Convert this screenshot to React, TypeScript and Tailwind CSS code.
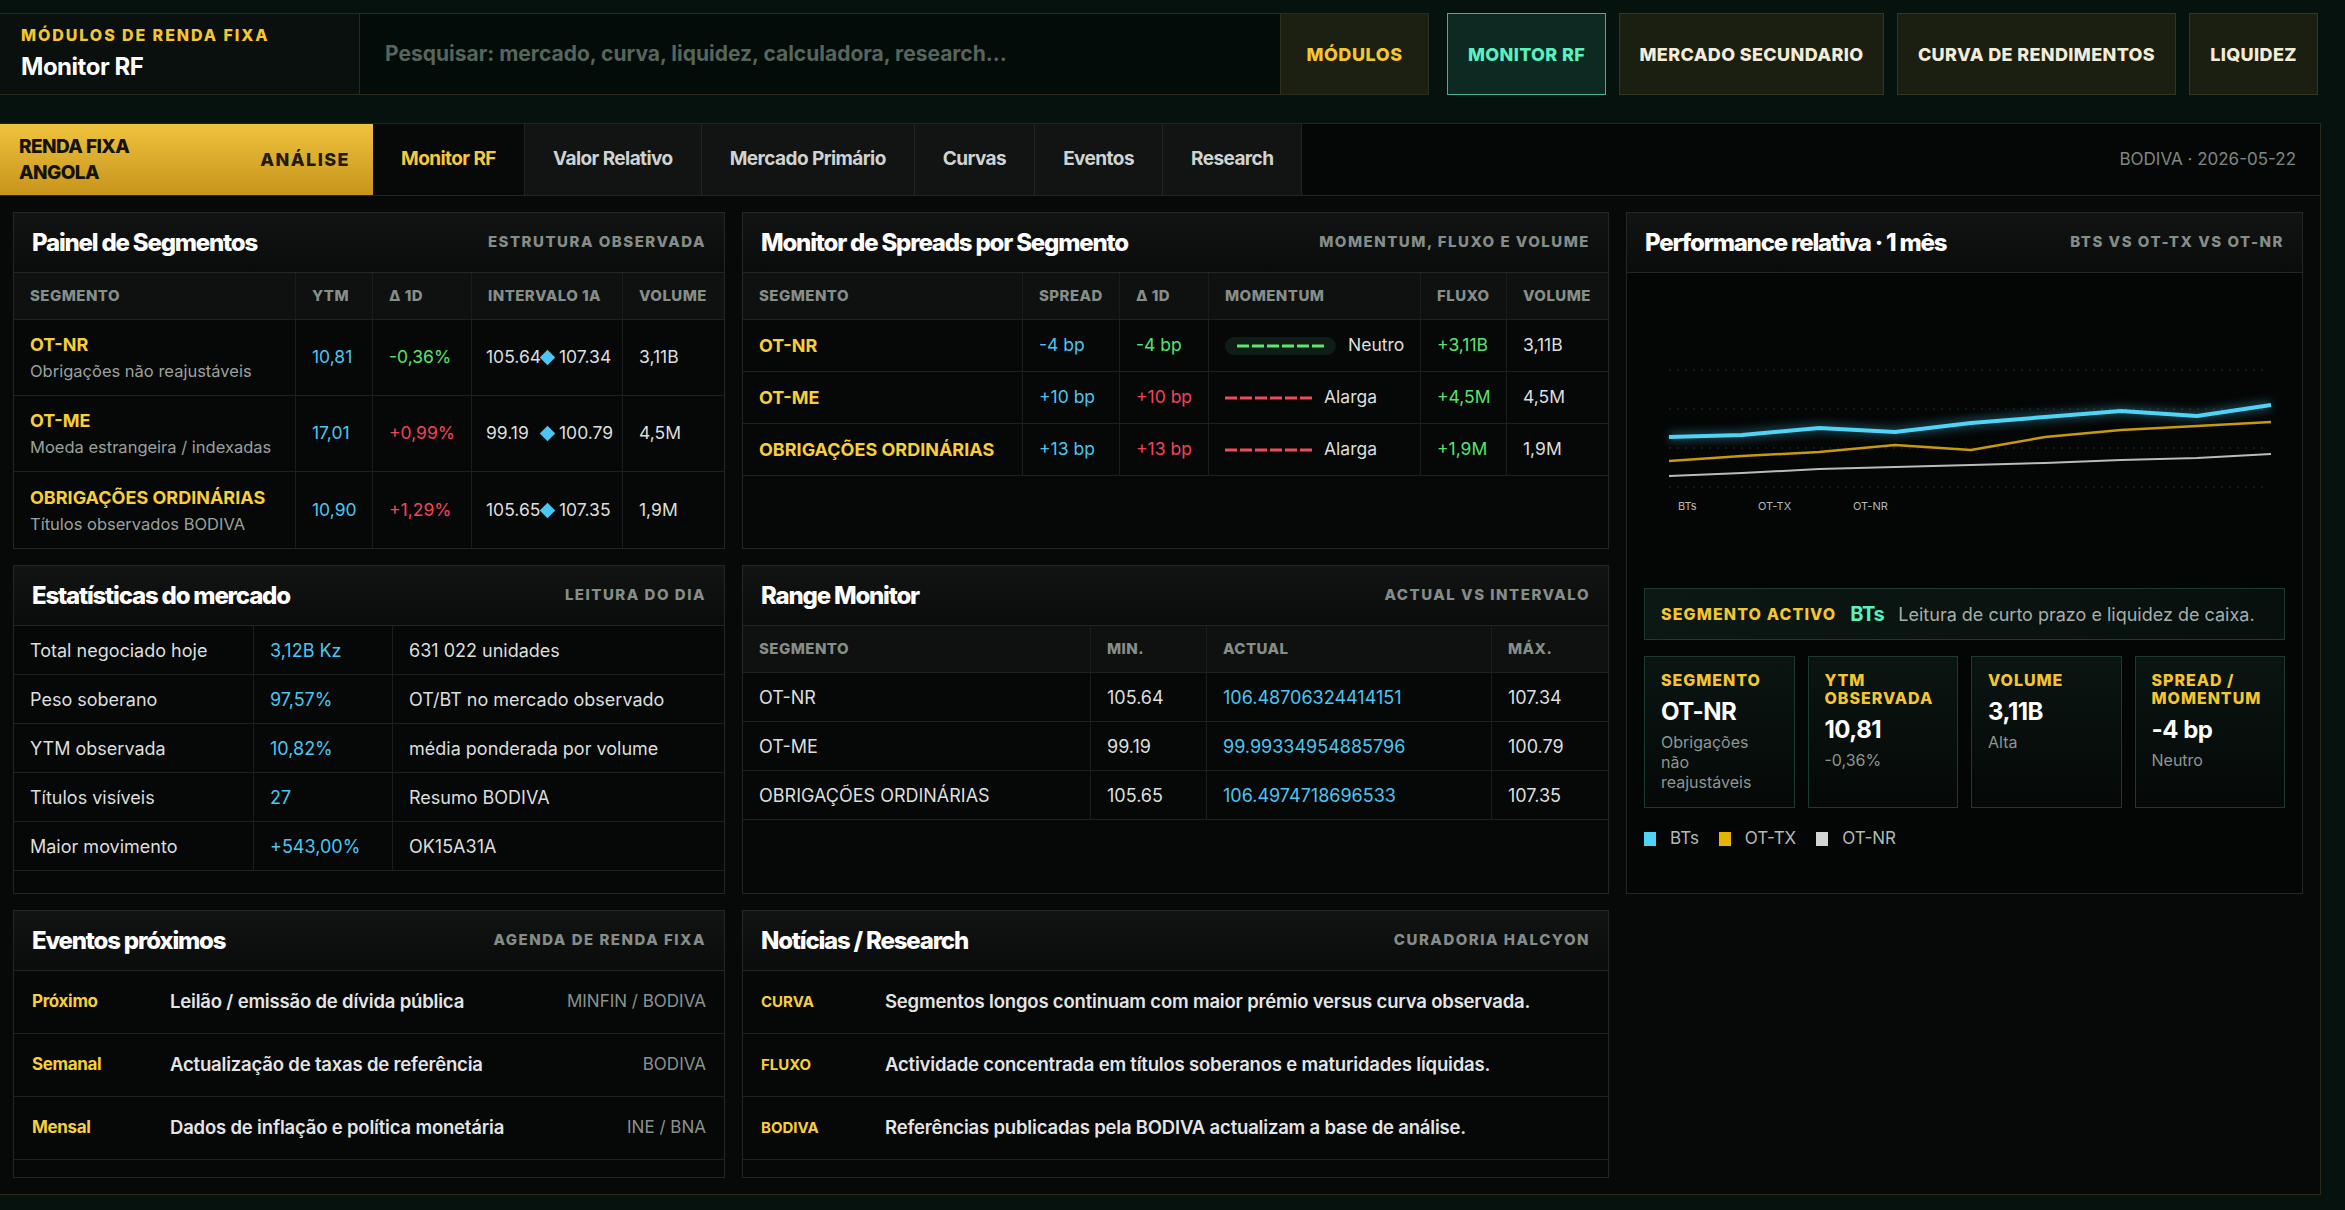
import React from "react";

const segs = [
  { name: "OT-NR", desc: "Obrigações não reajustáveis", ytm: "10,81", d: "-0,36%", good: true, min: "105.64", max: "107.34", vol: "3,11B" },
  { name: "OT-ME", desc: "Moeda estrangeira / indexadas", ytm: "17,01", d: "+0,99%", good: false, min: "99.19", max: "100.79", vol: "4,5M" },
  { name: "OBRIGAÇÕES ORDINÁRIAS", desc: "Títulos observados BODIVA", ytm: "10,90", d: "+1,29%", good: false, min: "105.65", max: "107.35", vol: "1,9M" },
];

const spreads = [
  { name: "OT-NR", spread: "-4 bp", d: "-4 bp", good: true, mom: "Neutro", flow: "+3,11B", vol: "3,11B" },
  { name: "OT-ME", spread: "+10 bp", d: "+10 bp", good: false, mom: "Alarga", flow: "+4,5M", vol: "4,5M" },
  { name: "OBRIGAÇÕES ORDINÁRIAS", spread: "+13 bp", d: "+13 bp", good: false, mom: "Alarga", flow: "+1,9M", vol: "1,9M" },
];

const stats = [
  ["Total negociado hoje", "3,12B Kz", "631 022 unidades"],
  ["Peso soberano", "97,57%", "OT/BT no mercado observado"],
  ["YTM observada", "10,82%", "média ponderada por volume"],
  ["Títulos visíveis", "27", "Resumo BODIVA"],
  ["Maior movimento", "+543,00%", "OK15A31A"],
];

const ranges = [
  ["OT-NR", "105.64", "106.48706324414151", "107.34"],
  ["OT-ME", "99.19", "99.99334954885796", "100.79"],
  ["OBRIGAÇÕES ORDINÁRIAS", "105.65", "106.4974718696533", "107.35"],
];

const events = [
  ["Próximo", "Leilão / emissão de dívida pública", "MINFIN / BODIVA"],
  ["Semanal", "Actualização de taxas de referência", "BODIVA"],
  ["Mensal", "Dados de inflação e política monetária", "INE / BNA"],
];

const news = [
  ["CURVA", "Segmentos longos continuam com maior prémio versus curva observada."],
  ["FLUXO", "Actividade concentrada em títulos soberanos e maturidades líquidas."],
  ["BODIVA", "Referências publicadas pela BODIVA actualizam a base de análise."],
];

const xs = [42, 115, 192, 268, 344, 418, 494, 570, 644];
const series = {
  bts: [164, 162, 155, 159, 150, 144, 138, 143, 132],
  ottx: [188, 183, 179, 172, 177, 164, 157, 153, 149],
  otnr: [203, 200, 196, 194, 192, 190, 187, 185, 181],
};
const pts = (ys: number[]) => ys.map((y, i) => `${xs[i]},${y}`).join(" ");

function Panel({ title, sub, children, className = "" }: { title: string; sub: string; children: React.ReactNode; className?: string }) {
  return (
    <section className={`flex flex-col border border-[#242625] bg-[#060707] ${className}`}>
      <div className="flex h-[60px] shrink-0 items-center justify-between border-b border-[#242625] bg-gradient-to-b from-[#121414] to-[#0a0b0b] px-[18px]">
        <h2 className="text-[24px] font-extrabold tracking-[-0.05em] text-white">{title}</h2>
        <span className="text-[15px] font-extrabold uppercase tracking-[0.1em] text-[#858d89]">{sub}</span>
      </div>
      {children}
    </section>
  );
}

function Dashes({ color }: { color: string }) {
  return (
    <svg width="87" height="4" className="block shrink-0">
      <line x1="0" y1="2" x2="87" y2="2" stroke={color} strokeWidth="3" strokeDasharray="12 3" />
    </svg>
  );
}

const th = "flex items-center whitespace-nowrap px-[16px] text-[15px] font-extrabold uppercase tracking-[0.03em] text-[#868e8a] border-r border-[#1b1d1c] last:border-r-0";
const td = "flex items-center whitespace-nowrap px-[16px] border-r border-[#1b1d1c] last:border-r-0";

export default function App() {
  return (
    <div className="min-h-screen w-[2345px] bg-[#06120e] pt-[13px] font-['Inter',sans-serif] text-[18px] text-[#dcdfdd]">
      {/* top bar */}
      <header className="flex h-[82px] w-[2318px] gap-[13px]">
        <div className="mr-[5px] flex flex-1 border-y border-[#2a2b1d] bg-[#040c09]">
          <div className="flex w-[360px] flex-col justify-center border-r border-[#2a2b1d] bg-[#09100d] pl-[21px]">
            <div className="text-[16px] font-extrabold tracking-[0.12em] text-[#f4c631]">MÓDULOS DE RENDA FIXA</div>
            <div className="mt-[2px] text-[24px] font-bold tracking-[-0.02em] text-white">Monitor RF</div>
          </div>
          <div className="flex flex-1 items-center pl-[25px] text-[21px] font-bold text-[#56655d]">
            Pesquisar: mercado, curva, liquidez, calculadora, research...
          </div>
          <div className="flex w-[149px] items-center justify-center border-x border-[#2f311e] bg-[#1b2013] text-[18px] font-extrabold tracking-[0.03em] text-[#f4c631]">
            MÓDULOS
          </div>
        </div>
        <div className="flex w-[159px] items-center justify-center border border-[#3db394] bg-[#0c2a22] text-[18px] font-extrabold tracking-[0.02em] text-[#5cf0c0]">
          MONITOR RF
        </div>
        {[
          ["MERCADO SECUNDARIO", "w-[265px]"],
          ["CURVA DE RENDIMENTOS", "w-[279px]"],
          ["LIQUIDEZ", "w-[129px]"],
        ].map(([t, w]) => (
          <div key={t} className={`flex ${w} items-center justify-center border border-[#35361f] bg-[#1a1f12] text-[18px] font-extrabold tracking-[0.02em] text-[#f2ecd8]`}>
            {t}
          </div>
        ))}
      </header>

      {/* main */}
      <main className="mt-[28px] w-[2321px] border-r border-b border-[#2b2a1a] bg-[#070909]">
        <nav className="flex h-[73px] border-y border-[#242419]">
          <div className="flex w-[373px] items-center justify-between bg-gradient-to-b from-[#efc33d] to-[#c6941a] pl-[19px] pr-[23px]">
            <div className="text-[19px] font-extrabold leading-[26px] tracking-[-0.03em] text-[#15120a]">
              RENDA FIXA
              <br />
              ANGOLA
            </div>
            <div className="text-[18px] font-extrabold tracking-[0.08em] text-[#221b07]">ANÁLISE</div>
          </div>
          <div className="flex items-center border-r border-[#222423] bg-[#070908] px-[28px] text-[19px] font-bold tracking-[-0.03em] text-[#f6c93c]">Monitor RF</div>
          {["Valor Relativo", "Mercado Primário", "Curvas", "Eventos", "Research"].map((t) => (
            <div key={t} className="flex items-center border-r border-[#222423] bg-[#121414] px-[28px] text-[19px] font-bold tracking-[-0.03em] text-[#cfd3d1]">
              {t}
            </div>
          ))}
          <div className="flex flex-1 items-center justify-end bg-[#050706] pr-[24px] text-[17px] text-[#7d8783]">BODIVA · 2026-05-22</div>
        </nav>

        <div className="grid grid-cols-[712px_867px_677px] grid-rows-[337px_329px_268px] gap-x-[17px] gap-y-[16px] px-[13px] pt-[16px] pb-[16px]">
          {/* Painel de Segmentos */}
          <Panel title="Painel de Segmentos" sub="Estrutura observada">
            <div className="grid h-[47px] grid-cols-[282px_77px_99px_151px_1fr] border-b border-[#1f2120] bg-[#0e1110]">
              <div className={th}>Segmento</div>
              <div className={th}>YTM</div>
              <div className={th}>Δ 1D</div>
              <div className={th}>Intervalo 1A</div>
              <div className={th}>Volume</div>
            </div>
            {segs.map((s) => (
              <div key={s.name} className="grid h-[76px] grid-cols-[282px_77px_99px_151px_1fr] border-b border-[#1f2120] text-[17.5px] last:border-b-0">
                <div className={`${td} flex-col items-start justify-center`}>
                  <div className="text-[18px] font-bold text-[#f7cf3a]">{s.name}</div>
                  <div className="mt-[1px] text-[16.5px] text-[#9aa19d]">{s.desc}</div>
                </div>
                <div className={`${td} text-[#4ac6f2]`}>{s.ytm}</div>
                <div className={`${td} ${s.good ? "text-[#58e36a]" : "text-[#f2435a]"}`}>{s.d}</div>
                <div className={`${td} pl-[14px]`}>
                  <span className="w-[55px] shrink-0">{s.min}</span>
                  <span className="ml-[1px] inline-block h-[11px] w-[11px] shrink-0 rotate-45 bg-[#4ac6f2]" />
                  <span className="ml-[6px]">{s.max}</span>
                </div>
                <div className={td}>{s.vol}</div>
              </div>
            ))}
          </Panel>

          {/* Monitor de Spreads */}
          <Panel title="Monitor de Spreads por Segmento" sub="Momentum, fluxo e volume">
            <div className="grid h-[47px] grid-cols-[280px_97px_89px_212px_86px_1fr] border-b border-[#1f2120] bg-[#0e1110]">
              <div className={th}>Segmento</div>
              <div className={th}>Spread</div>
              <div className={th}>Δ 1D</div>
              <div className={th}>Momentum</div>
              <div className={th}>Fluxo</div>
              <div className={th}>Volume</div>
            </div>
            {spreads.map((s) => (
              <div key={s.name} className="grid h-[52px] grid-cols-[280px_97px_89px_212px_86px_1fr] border-b border-[#1f2120] text-[17.5px]">
                <div className={`${td} text-[18px] font-bold text-[#f7cf3a]`}>{s.name}</div>
                <div className={`${td} text-[#4ac6f2]`}>{s.spread}</div>
                <div className={`${td} ${s.good ? "text-[#58e36a]" : "text-[#f2435a]"}`}>{s.d}</div>
                <div className={td}>
                  {s.good ? (
                    <span className="flex h-[18px] items-center rounded-full bg-[#0f1d17] px-[12px]">
                      <Dashes color="#5ee66e" />
                    </span>
                  ) : (
                    <Dashes color="#f04a5c" />
                  )}
                  <span className="ml-[12px]">{s.mom}</span>
                </div>
                <div className={`${td} text-[#58e36a]`}>{s.flow}</div>
                <div className={td}>{s.vol}</div>
              </div>
            ))}
          </Panel>

          {/* Performance relativa */}
          <Panel title="Performance relativa · 1 mês" sub="BTs vs OT-TX vs OT-NR" className="row-span-2">
            <div className="flex flex-1 flex-col bg-[#040505]">
              <svg width="675" height="315" className="block">
                <defs>
                  <filter id="glow" x="-10%" y="-50%" width="120%" height="200%">
                    <feGaussianBlur stdDeviation="5" />
                  </filter>
                </defs>
                {[97, 136, 175, 214].map((y) => (
                  <line key={y} x1="42" y1={y} x2="642" y2={y} stroke="#2b2e2d" strokeWidth="1" strokeDasharray="2 6" />
                ))}
                <polyline points={pts(series.bts)} fill="none" stroke="#49d2f5" strokeOpacity="0.35" strokeWidth="8" filter="url(#glow)" />
                <polyline points={pts(series.otnr)} fill="none" stroke="#b9bcbb" strokeWidth="2" strokeLinejoin="round" />
                <polyline points={pts(series.ottx)} fill="none" stroke="#c79a0c" strokeWidth="2.5" strokeLinejoin="round" />
                <polyline points={pts(series.bts)} fill="none" stroke="#4fd4f7" strokeWidth="4" strokeLinejoin="round" />
                <g fill="#b4b9b7" fontSize="11" fontFamily="Inter, sans-serif">
                  <text x="51" y="237">BTs</text>
                  <text x="131" y="237">OT-TX</text>
                  <text x="226" y="237">OT-NR</text>
                </g>
              </svg>
              <div className="px-[17px]">
                <div className="flex h-[52px] items-center border border-[#1d3a2f] bg-gradient-to-r from-[#0b1814] to-[#08100d] pl-[16px]">
                  <span className="text-[16px] font-extrabold tracking-[0.07em] text-[#f4c631]">SEGMENTO ACTIVO</span>
                  <span className="ml-[14px] text-[20px] font-bold tracking-[-0.02em] text-[#5cf0c0]">BTs</span>
                  <span className="ml-[14px] text-[18px] text-[#a6adaa]">Leitura de curto prazo e liquidez de caixa.</span>
                </div>
                <div className="mt-[16px] grid h-[152px] grid-cols-4 gap-[13px]">
                  {[
                    ["SEGMENTO", "OT-NR", "Obrigações não reajustáveis"],
                    ["YTM OBSERVADA", "10,81", "-0,36%"],
                    ["VOLUME", "3,11B", "Alta"],
                    ["SPREAD / MOMENTUM", "-4 bp", "Neutro"],
                  ].map(([l, v, s]) => (
                    <div key={l} className="border border-[#1d3a2f] bg-gradient-to-b from-[#0a1512] to-[#050908] px-[16px] pt-[14px]">
                      <div className="text-[16px] font-extrabold leading-[18px] tracking-[0.06em] text-[#f4c631]">{l}</div>
                      <div className="mt-[8px] text-[24px] font-bold leading-[30px] tracking-[-0.02em] text-white">{v}</div>
                      <div className="mt-[5px] text-[16px] leading-[20px] text-[#8d9692]">{s}</div>
                    </div>
                  ))}
                </div>
                <div className="mt-[18px] flex items-center text-[17px] text-[#b3bab6]">
                  <span className="h-[14px] w-[12px] bg-[#4fd4f7]" />
                  <span className="ml-[14px]">BTs</span>
                  <span className="ml-[20px] h-[14px] w-[12px] bg-[#e6b400]" />
                  <span className="ml-[14px]">OT-TX</span>
                  <span className="ml-[20px] h-[14px] w-[12px] bg-[#d4d4d4]" />
                  <span className="ml-[14px]">OT-NR</span>
                </div>
              </div>
            </div>
          </Panel>

          {/* Estatísticas */}
          <Panel title="Estatísticas do mercado" sub="Leitura do dia">
            {stats.map(([a, b, c]) => (
              <div key={a} className="grid h-[49px] grid-cols-[240px_139px_1fr] border-b border-[#1f2120]">
                <div className={td}>{a}</div>
                <div className={`${td} text-[#4ac6f2]`}>{b}</div>
                <div className={td}>{c}</div>
              </div>
            ))}
          </Panel>

          {/* Range Monitor */}
          <Panel title="Range Monitor" sub="Actual vs intervalo">
            <div className="grid h-[47px] grid-cols-[348px_116px_285px_1fr] border-b border-[#1f2120] bg-[#0e1110]">
              <div className={th}>Segmento</div>
              <div className={th}>Min.</div>
              <div className={th}>Actual</div>
              <div className={th}>Máx.</div>
            </div>
            {ranges.map(([a, b, c, d]) => (
              <div key={a} className="grid h-[49px] grid-cols-[348px_116px_285px_1fr] border-b border-[#1f2120]">
                <div className={td}>{a}</div>
                <div className={td}>{b}</div>
                <div className={`${td} text-[#4ac6f2]`}>{c}</div>
                <div className={td}>{d}</div>
              </div>
            ))}
          </Panel>

          {/* Eventos */}
          <Panel title="Eventos próximos" sub="Agenda de renda fixa">
            {events.map(([a, b, c]) => (
              <div key={a} className="flex h-[63px] items-center border-b border-[#1f2120] px-[18px]">
                <span className="w-[138px] text-[17px] font-bold tracking-[-0.02em] text-[#f7cf3a]">{a}</span>
                <span className="flex-1 text-[18.5px] font-semibold tracking-[-0.01em] text-[#e3e5e4]">{b}</span>
                <span className="text-[17px] text-[#8a928e]">{c}</span>
              </div>
            ))}
          </Panel>

          {/* Notícias */}
          <Panel title="Notícias / Research" sub="Curadoria Halcyon">
            {news.map(([a, b]) => (
              <div key={a} className="flex h-[63px] items-center border-b border-[#1f2120] px-[18px]">
                <span className="w-[124px] text-[15px] font-bold text-[#f7cf3a]">{a}</span>
                <span className="text-[18.5px] font-semibold tracking-[-0.01em] text-[#e3e5e4]">{b}</span>
              </div>
            ))}
          </Panel>
        </div>
      </main>
    </div>
  );
}
